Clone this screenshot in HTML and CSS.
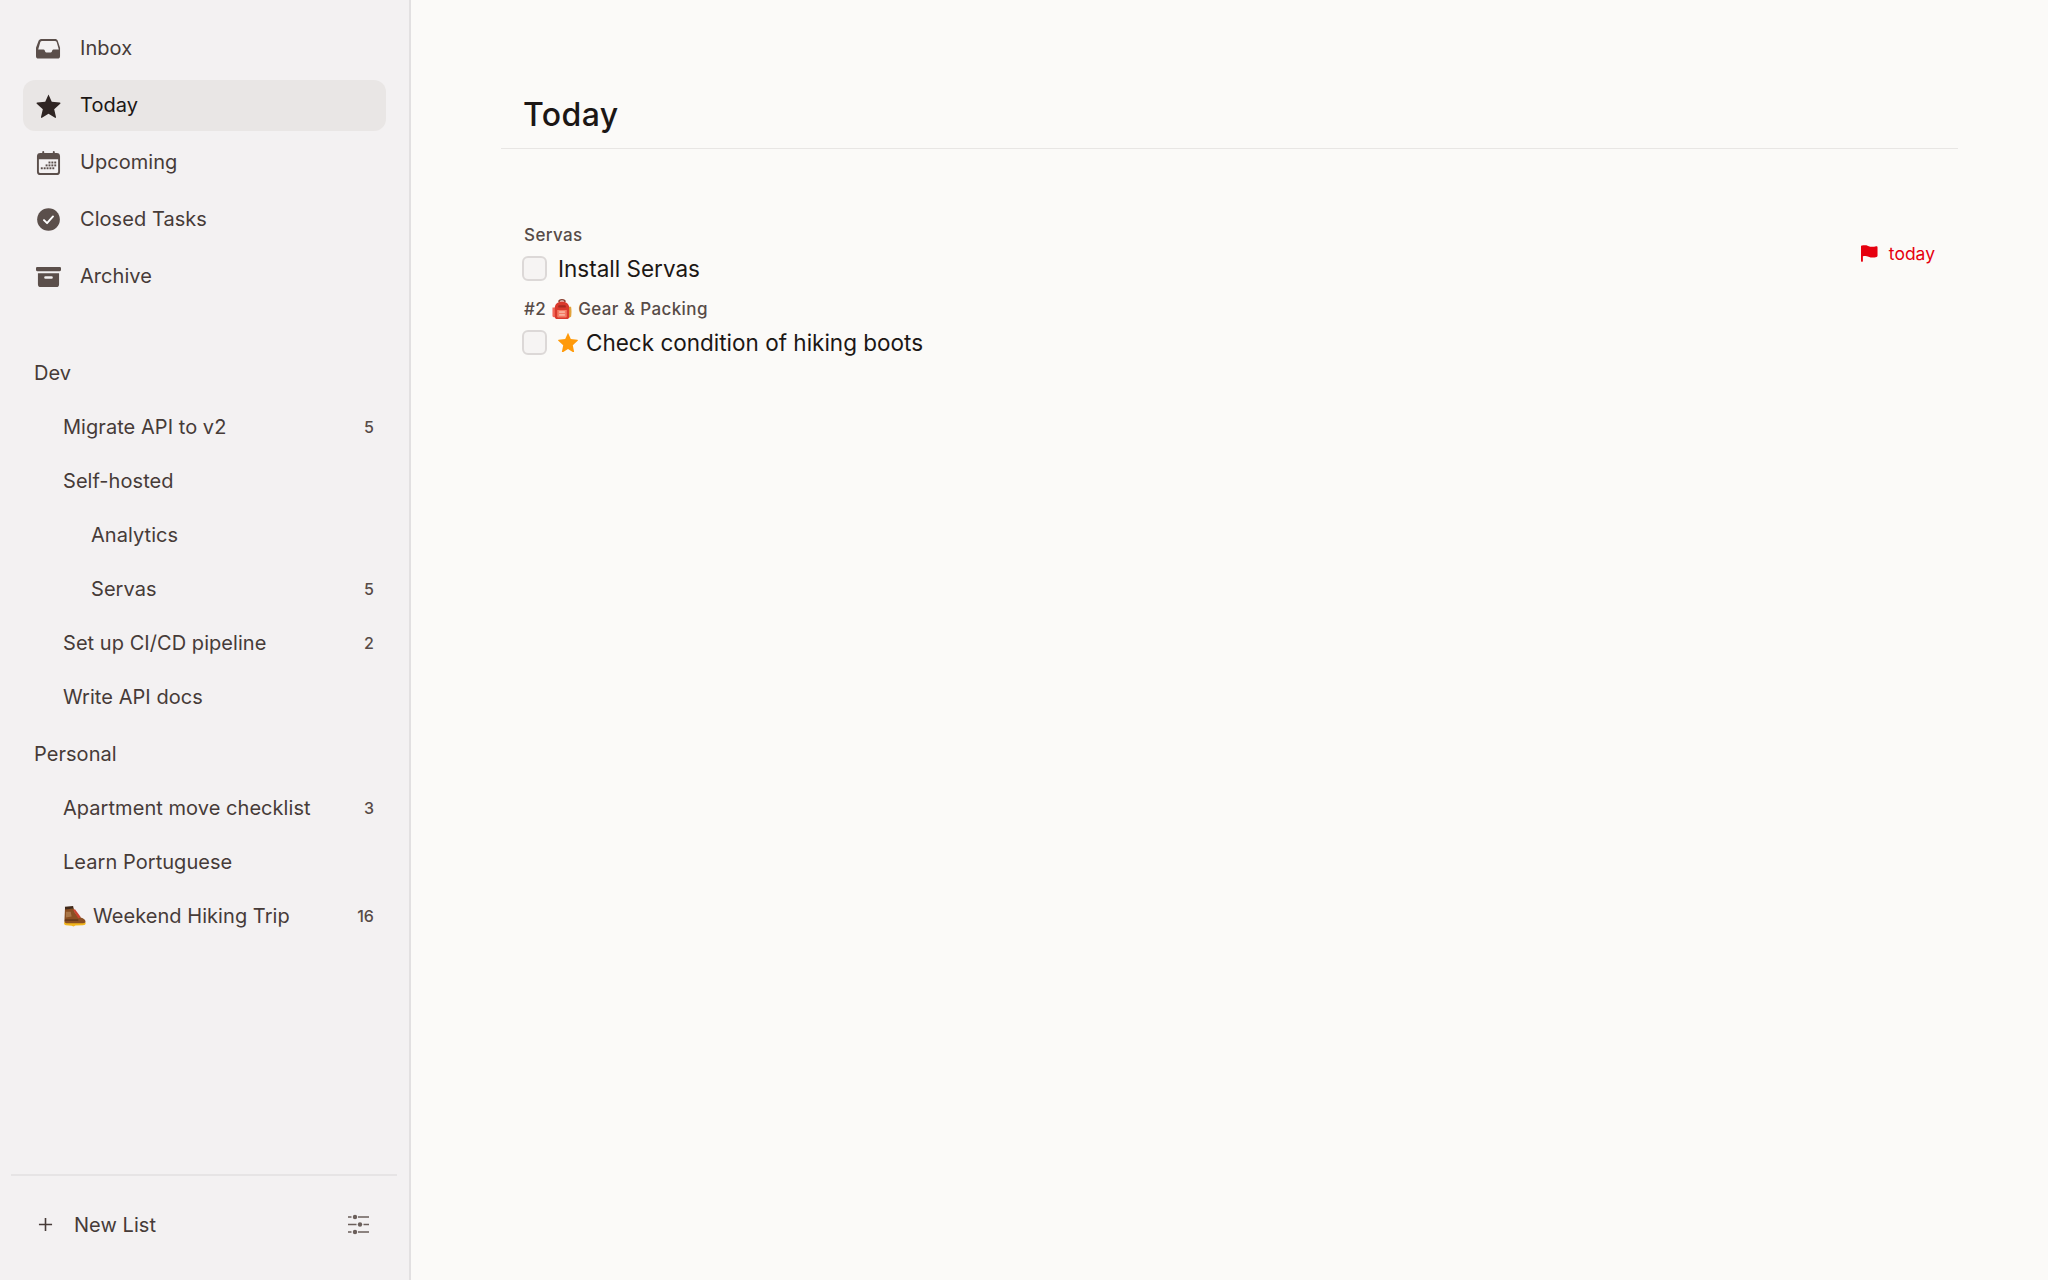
FILE: index.html
```html
<!DOCTYPE html>
<html lang="en">
<head>
<meta charset="utf-8">
<title>Today</title>
<link rel="stylesheet" href="styles.css">
</head>
<body>
<div class="app">
  <aside class="sidebar">
    <nav class="nav">
      <a class="nav-item">
        <svg class="nav-icon" viewBox="0 0 26 26"><path fill="#5b4f4b" fill-rule="evenodd" d="M6.200 3h13.600c1.300 0 2.300.7 2.800 1.900l2.400 7.200V21c0 1.400-1 2.400-2.400 2.400H2.400C1 23.400 0 22.400 0 21v-8.900l2.700-7.200C3.200 3.700 4.700 3 6.200 3zm.1 2.100c-.9 0-1.500.4-1.800 1.200l-2.200 7.700h5.500c.6 0 1 .3 1.200.8l.6 1.500c.2.500.6.800 1.200.800h4.400c.6 0 1-.3 1.200-.8l.6-1.500c.2-.5.6-.8 1.200-.8h5.500l-2.200-7.700c-.3-.8-.9-1.200-1.800-1.200z"/></svg>
        <span class="nav-label">Inbox</span>
      </a>
      <a class="nav-item active">
        <svg class="nav-icon" viewBox="0 0 26 26"><path fill="#2f2523" d="M13 1.500l3.400 7.700 8.400.8c.6.100.9.800.4 1.200l-6.300 5.600 1.900 8.200c.1.600-.5 1.100-1 .8L13 21.500l-6.800 4.300c-.5.300-1.100-.2-1-.8l1.900-8.200-6.300-5.600c-.5-.4-.2-1.100.4-1.200l8.400-.8z"/></svg>
        <span class="nav-label">Today</span>
      </a>
      <a class="nav-item">
        <svg class="nav-icon" viewBox="0 0 26 26"><g fill="#5b4f4b"><rect x="6.500" y="1" width="2" height="4" rx="1"/><rect x="17.500" y="1" width="2" height="4" rx="1"/><path fill-rule="evenodd" d="M4.500 3h17A3.500 3.500 0 0 1 25 6.500v16a3.500 3.500 0 0 1-3.500 3.500h-17A3.500 3.500 0 0 1 1 22.500v-16A3.500 3.500 0 0 1 4.500 3zM3 9.500v13A1.500 1.500 0 0 0 4.500 24h17a1.500 1.500 0 0 0 1.500-1.500v-13z"/><g><rect x="13" y="12" width="2" height="2"/><rect x="16" y="12" width="2" height="2"/><rect x="19" y="12" width="2" height="2"/><rect x="10" y="15" width="2" height="2"/><rect x="13" y="15" width="2" height="2"/><rect x="16" y="15" width="2" height="2"/><rect x="19" y="15" width="2" height="2"/><rect x="5" y="18" width="2" height="2"/><rect x="8" y="18" width="2" height="2"/><rect x="11" y="18" width="2" height="2"/><rect x="14" y="18" width="2" height="2"/><rect x="17" y="18" width="2" height="2"/></g></g></svg>
        <span class="nav-label">Upcoming</span>
      </a>
      <a class="nav-item">
        <svg class="nav-icon" viewBox="0 0 26 26"><circle cx="13" cy="13" r="11.800" fill="#5b4f4b"/><path d="M8.300 13.600l3.200 3.200 6.200-7" fill="none" stroke="#fff" stroke-width="2" stroke-linecap="round" stroke-linejoin="round"/></svg>
        <span class="nav-label">Closed Tasks</span>
      </a>
      <a class="nav-item">
        <svg class="nav-icon" viewBox="0 0 26 26"><g fill="#5b4f4b"><rect x="0" y="3" width="26" height="4.500" rx="1.200"/><path fill-rule="evenodd" d="M2 9.500h22v11.500a3 3 0 0 1-3 3H5a3 3 0 0 1-3-3zm7.800 3.200a1 1 0 0 0 0 2.600h6.400a1 1 0 0 0 0-2.600z"/></g></svg>
        <span class="nav-label">Archive</span>
      </a>
    </nav>

    <section class="lists">
      <h3 class="group">Dev</h3>
      <a class="list-item"><span>Migrate API to v2</span><span class="count">5</span></a>
      <a class="list-item"><span>Self-hosted</span></a>
      <a class="list-item nested"><span>Analytics</span></a>
      <a class="list-item nested"><span>Servas</span><span class="count">5</span></a>
      <a class="list-item"><span>Set up CI/CD pipeline</span><span class="count">2</span></a>
      <a class="list-item"><span>Write API docs</span></a>
      <h3 class="group group-next">Personal</h3>
      <a class="list-item"><span>Apartment move checklist</span><span class="count">3</span></a>
      <a class="list-item"><span>Learn Portuguese</span></a>
      <a class="list-item">
        <span class="with-emoji">
          <svg class="boot" viewBox="0 0 24 22"><path fill="#f2b61d" d="M2 16.500h20c1.500 0 2 1.300 1.500 2.400-.4 1-1.500 1.200-2.500 1.200l-8 .3-2 1.100-2-.7-6-.6C1 20 .5 17.300 2 16.500z"/><path fill="#8a4f22" d="M2 3l9-1 1.500 5 4.500 4c2 1.500 6 2 6.500 5 .2 1.500-1 2-2.500 2H3.500C1.500 18 1 16.500 1.500 14z"/><path fill="#40291b" d="M2 .9 10.500 0l.6 2.600-9 1z"/><path fill="#c9432e" d="M10.500 4l2-.5 6 8-2.500 1.500z"/><path fill="#a97648" d="M3 6h5l1 5-6 1z"/><path fill="#5f3518" d="M2 14h14v1.500H2z"/></svg>
          Weekend Hiking Trip
        </span>
        <span class="count">16</span>
      </a>
    </section>

    <footer class="side-footer">
      <a class="new-list">
        <svg class="plus" viewBox="0 0 16 16"><path d="M8 1v14M1 8h14" stroke="#463b38" stroke-width="1.700" fill="none"/></svg>
        <span>New List</span>
      </a>
      <svg class="sliders" viewBox="0 0 21 21"><path stroke="#6b5f5b" stroke-width="1.700" fill="none" d="M0 3h3.500M10 3h11M0 10.500h8.500M15.500 10.500H21M0 18h3.500M10 18h11"/><g fill="#6b5f5b"><circle cx="7" cy="3" r="2.200"/><circle cx="12" cy="10.500" r="2.200"/><circle cx="7" cy="18" r="2.200"/></g></svg>
    </footer>
  </aside>

  <main class="main">
    <header class="page-header"><h1 class="title">Today</h1></header>
    <div class="tasks">
      <div class="task-row">
        <div class="task-body">
          <div class="task-meta">Servas</div>
          <div class="task"><span class="check"></span><span class="task-text">Install Servas</span></div>
        </div>
        <div class="due">
          <svg class="flag" viewBox="0 0 18 18"><path fill="#e6000f" d="M0 1.500C0 .8.500.500 1 .500c2 0 4-.5 6.500.5s5 1.300 8.500.3c.8-.2 1.500.2 1.500 1v9.200c0 .6-.3 1-1 1.200-3.500 1-6 .7-8.500-.3s-4-.6-6-.5v5c0 .5-.5 1-1 1s-1-.5-1-1z"/></svg>
          <span>today</span>
        </div>
      </div>
      <div class="task-row">
        <div class="task-body">
          <div class="task-meta">
            <span>#2</span>
            <svg class="pack" viewBox="0 0 20 22"><path fill="#8a3d2e" d="M6 3c0-2 1.500-3 4-3s4 1 4 3l-1.500.4C12.300 2 11.500 1.600 10 1.600S7.700 2 7.500 3.400z"/><path fill="#f2685a" d="M0 9h3v10H1.500C.5 19 0 18.400 0 17.500z"/><path fill="#e2a33b" d="M17 8h2.500c.6 3 .6 7 0 10.500L17 20z"/><path fill="#d9392c" d="M2.500 9c0-4 3.300-6.500 7.500-6.500s7.500 2.500 7.500 6.500v9.500c0 1.500-1 2.500-2.500 2.500H5c-1.500 0-2.500-1-2.500-2.500z"/><path fill="#f47a63" d="M5 11.500h10V18c0 .8-.5 1.300-1.300 1.300H6.300C5.500 19.300 5 18.800 5 18z"/><rect fill="#fbc9b5" x="7" y="13" width="6" height="1.300"/><rect fill="#fbc9b5" x="7" y="16" width="6" height="1.300"/><rect fill="#a82a20" x="6" y="6.500" width="8" height="2.500" rx="1"/></svg>
            <span>Gear &amp; Packing</span>
          </div>
          <div class="task">
            <span class="check"></span>
            <svg class="star" viewBox="0 0 20 20"><path fill="#ff9a0a" d="M10 .8l2.800 6.100 6.600.8c.5.100.7.700.3 1l-4.900 4.500 1.300 6.500c.1.500-.4.900-.9.600L10 17.100l-5.200 3.200c-.5.300-1-.1-.9-.6l1.300-6.500L.3 8.700c-.4-.3-.2-.9.300-1l6.600-.8z"/></svg>
            <span class="task-text">Check condition of hiking boots</span>
          </div>
        </div>
      </div>
    </div>
  </main>
</div>
</body>
</html>
```
FILE: styles.css
```css
* { box-sizing: border-box; }
html, body { margin: 0; padding: 0; height: 100%; }
body {
  font-family: Inter, "Noto Sans", sans-serif;
  background: #fbfaf8;
  color: #1c1715;
}
.app { display: flex; height: 1280px; overflow: hidden; }

.sidebar {
  width: 411px;
  flex: none;
  height: 100%;
  display: flex;
  flex-direction: column;
  background: #f3f1f2;
  border-right: 2px solid #e2e0e1;
  padding: 23px 0 7px;
  letter-spacing: .05px;
}
.nav {
  display: flex;
  flex-direction: column;
  gap: 6px;
  margin: 0 23px;
}
.nav-item {
  display: flex;
  align-items: center;
  gap: 19px;
  height: 51px;
  padding: 0 13px;
  border-radius: 12px;
  font-size: 20px;
  color: #463b38;
}
.nav-item.active { background: #e9e6e5; color: #1c1715; }
.nav-icon { width: 25px; height: 25px; flex: none; }
.nav-label { margin-bottom: 2px; }

.lists { margin: 44px 23px 0; flex: 1; }
.group {
  margin: 0 0 0 11px;
  height: 54px;
  display: flex;
  align-items: center;
  font-size: 20px;
  font-weight: 400;
  color: #463b38;
}
.group-next { margin-top: 3px; }
.list-item {
  display: flex;
  align-items: center;
  justify-content: space-between;
  height: 54px;
  padding: 0 12px 0 40px;
  font-size: 20px;
  color: #463b38;
}
.list-item.nested { padding-left: 68px; }
.count { font-size: 16px; font-weight: 500; color: #574b47; }
.with-emoji { display: flex; align-items: center; gap: 7px; }
.boot { width: 23px; height: 21px; flex: none; }

.side-footer {
  margin: 0 12px 0 11px;
  height: 99px;
  flex: none;
  border-top: 2px solid #e6e4e5;
  display: flex;
  align-items: center;
  justify-content: space-between;
  padding: 0 28px 0 27px;
  color: #463b38;
}
.new-list { display: flex; align-items: center; gap: 21px; font-size: 20px; }
.plus { width: 15px; height: 15px; flex: none; }
.sliders { width: 21px; height: 21px; flex: none; }

.main { flex: 1; min-width: 0; padding: 0 90px; }
.page-header {
  height: 149px;
  padding: 93px 22px 0;
  border-bottom: 1px solid #e8e6e4;
}
.title { margin: 0; font-size: 32px; font-weight: 500; letter-spacing: .4px; line-height: 44px; color: #1c1715; }
.tasks { padding: 73px 23px 0; display: flex; flex-direction: column; gap: 11px; }
.task-row { display: flex; align-items: center; justify-content: space-between; }
.task-meta {
  display: flex;
  align-items: center;
  gap: 6px;
  height: 26px;
  font-size: 17px;
  font-weight: 500;
  letter-spacing: .4px;
  color: #574b47;
}
.pack { width: 20px; height: 21px; flex: none; }
.task { display: flex; align-items: center; height: 34px; margin-top: 3px; font-size: 22.5px; color: #1c1715; }
.check {
  width: 25px;
  height: 25px;
  margin-left: -2px;
  margin-right: 11px;
  border: 2px solid #dcd8d7;
  border-radius: 6px;
  background: #f6f4f3;
  flex: none;
}
.star { width: 20px; height: 20px; margin-right: 8px; flex: none; }
.due { display: flex; align-items: center; gap: 11px; font-size: 17.5px; color: #e6000f; }
.flag { width: 17px; height: 17px; flex: none; }
```
